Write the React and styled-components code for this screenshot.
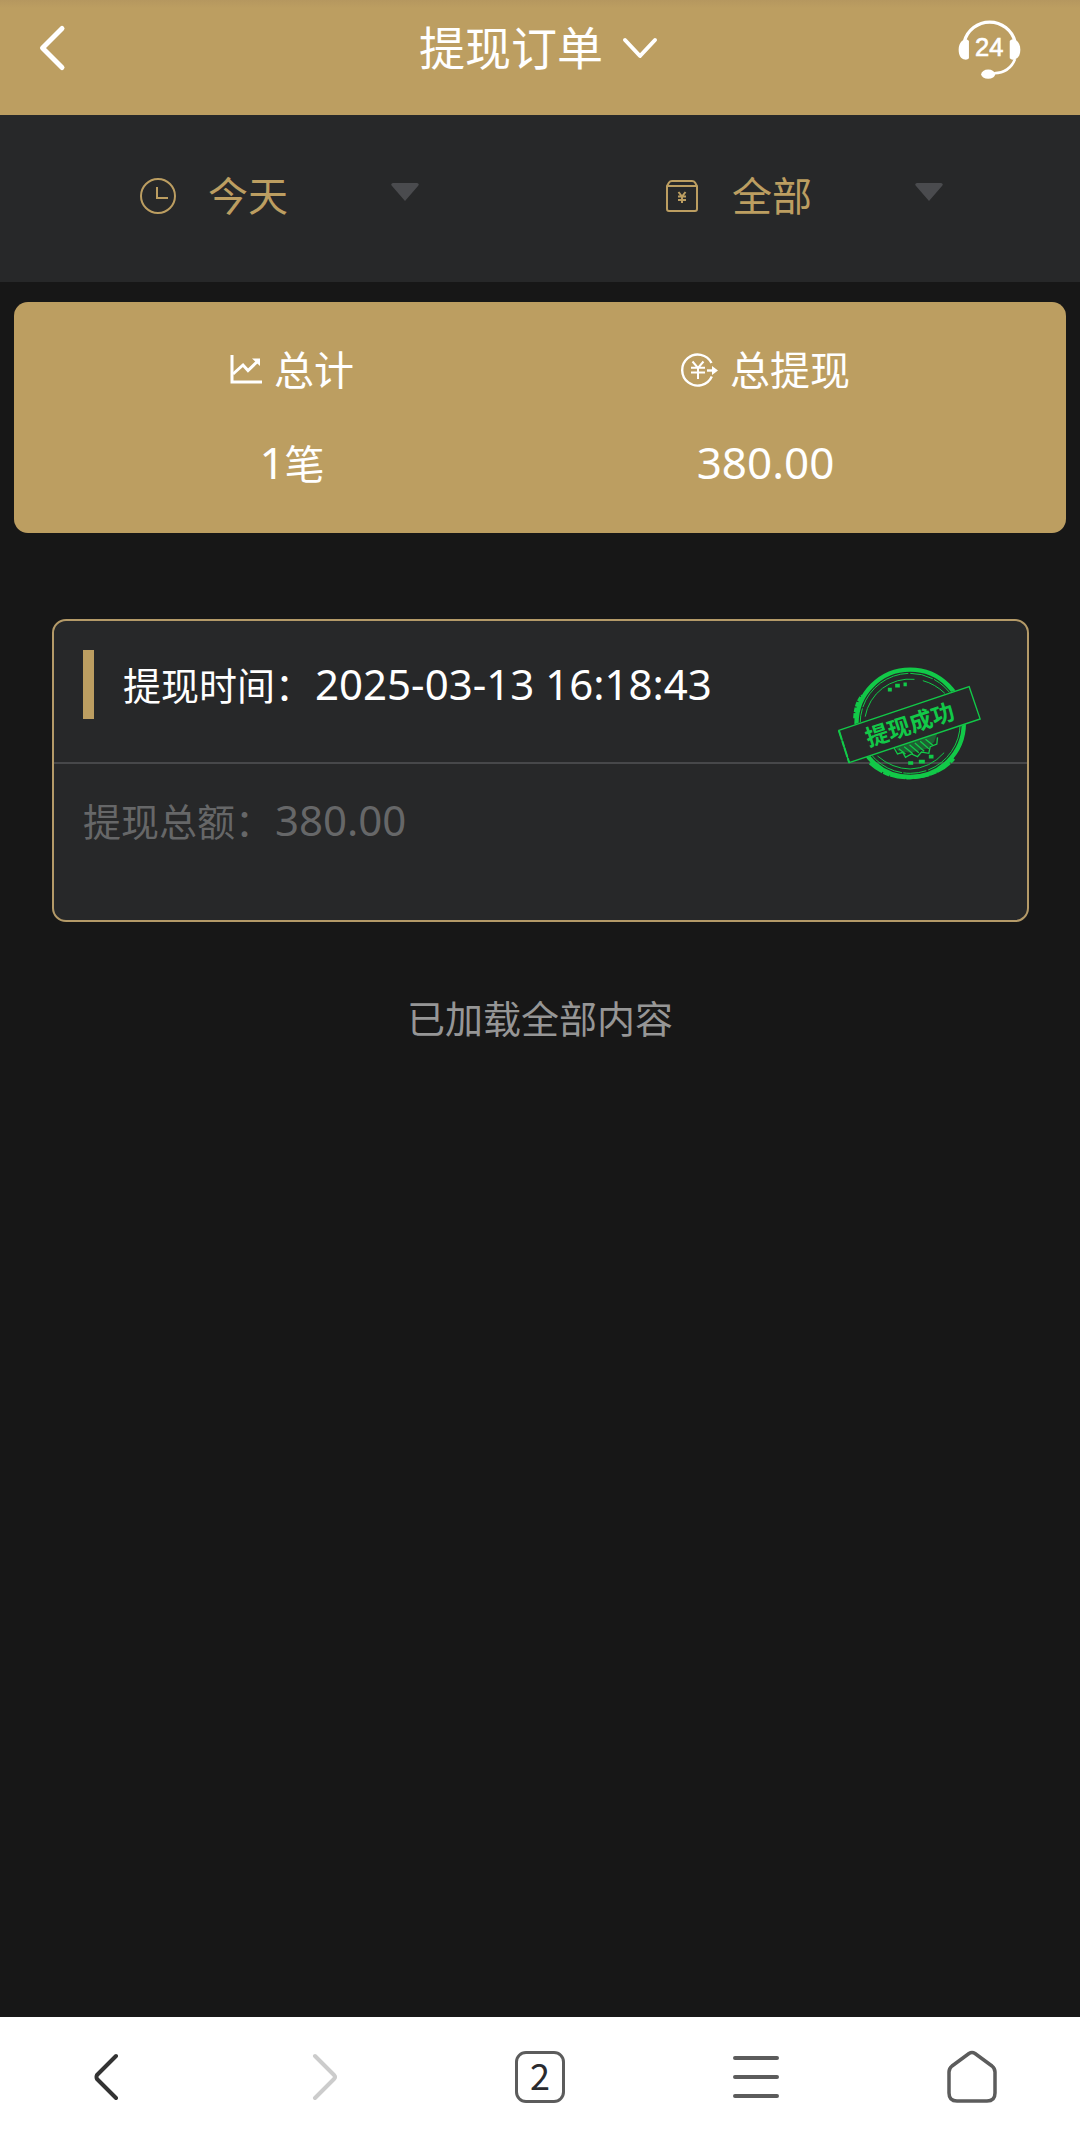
import { useState } from "react"
import styled, { createGlobalStyle, ThemeProvider } from "styled-components"

const theme = {
  colors: {
    gold: "#bc9e61",
    panel: "#272829",
    background: "#171717",
    line: "#47484a",
    muted: "#666768",
    hint: "#969696",
    stamp: "#12c948",
  },
}

const GlobalStyle = createGlobalStyle`
  * {
    box-sizing: border-box;
    margin: 0;
    padding: 0;
  }

  body {
    background-color: ${theme.colors.background};
    font-family: "Noto Sans", "Noto Sans CJK SC", sans-serif;
    color: #fff;
  }

  button,
  select {
    background: none;
    border: none;
    color: inherit;
    font: inherit;
    cursor: pointer;
  }

  svg {
    display: block;
    flex-shrink: 0;
  }
`

const Page = styled.div`
  display: flex;
  flex-direction: column;
  min-height: 100vh;
`

const Header = styled.header`
  display: grid;
  grid-template-columns: 1fr auto 1fr;
  align-items: center;
  height: 115px;
  padding: 0 58px 20px 36px;
  background: linear-gradient(#b5975f, ${(props) => props.theme.colors.gold} 8px);
`

const HeaderButton = styled.button`
  justify-self: ${(props) => (props.$end ? "end" : "start")};
`

const TitleButton = styled.button`
  display: flex;
  align-items: center;
  gap: 18px;
  padding-left: 20px;
`

const Title = styled.h1`
  padding-bottom: 2px;
  font-size: 46px;
  font-weight: 400;
  line-height: 56px;
`

const Filters = styled.form`
  display: grid;
  grid-template-columns: 1fr 1fr;
  justify-items: center;
  height: 167px;
  padding: 0 14px 6px 18px;
  background-color: ${(props) => props.theme.colors.panel};
`

const Filter = styled.label`
  display: flex;
  align-items: center;
  color: ${(props) => props.theme.colors.gold};
`

const FilterSelect = styled.select`
  appearance: none;
  width: 182px;
  height: 60px;
  margin-left: 32px;
  font-size: 40px;
  outline: none;

  option {
    background-color: ${(props) => props.theme.colors.panel};
  }
`

const FilterArrow = styled.svg`
  margin-bottom: 8px;
`

const Summary = styled.section`
  display: flex;
  justify-content: space-between;
  margin: 20px 14px 0;
  padding: 38px 20% 39px;
  border-radius: 14px;
  background-color: ${(props) => props.theme.colors.gold};
`

const SummaryItem = styled.div`
  display: flex;
  flex-direction: column;
  align-items: center;
  gap: 32px;
`

const SummaryLabel = styled.div`
  display: flex;
  align-items: center;
  gap: 12px;
  font-size: 40px;
  line-height: 60px;
`

const SummaryValue = styled.div`
  font-size: 40px;
  line-height: 60px;
`

const Digits = styled.span`
  font-size: ${(props) => (props.$large ? 44 : 42)}px;
`

const Order = styled.article`
  position: relative;
  margin: 86px 51px 0 52px;
  border: 2px solid #b49a68;
  border-radius: 14px;
  background-color: ${(props) => props.theme.colors.panel};
  font-size: 38px;
  line-height: 60px;
`

const OrderLine = styled.p`
  display: flex;
  align-items: baseline;
  gap: 2px;
`

const OrderHeader = styled.div`
  display: flex;
  align-items: center;
  gap: 29px;
  padding: 29px 29px 43px;
  border-bottom: 2px solid ${(props) => props.theme.colors.line};

  &::before {
    content: "";
    width: 11px;
    height: 69px;
    background-color: ${(props) => props.theme.colors.gold};
  }
`

const OrderBody = styled.div`
  padding: 26px 29px 69px;
  color: ${(props) => props.theme.colors.muted};
`

const StampIcon = styled.svg`
  position: absolute;
  top: 45px;
  right: 44px;
`

const EndOfList = styled.p`
  margin-top: 66px;
  font-size: 38px;
  line-height: 60px;
  text-align: center;
  color: ${(props) => props.theme.colors.hint};
`

const BottomBar = styled.nav`
  position: sticky;
  bottom: 0;
  display: grid;
  grid-template-columns: repeat(5, 1fr);
  height: 120px;
  margin-top: auto;
  background-color: #fff;
`

const BottomButton = styled.button`
  display: flex;
  align-items: center;
  justify-content: center;
  color: ${(props) => props.$color || "#5c5c5c"};
`

const TabCount = styled.span`
  display: flex;
  align-items: center;
  justify-content: center;
  width: 50px;
  height: 52px;
  padding-bottom: 6px;
  border: 3px solid #5c5c5c;
  border-radius: 11px;
  font-family: "Noto Sans CJK SC", sans-serif;
  font-size: 36px;
  line-height: 40px;
  color: #2a2a2e;
`

const BackIcon = () => (
  <svg width="32" height="48" viewBox="0 0 32 48" fill="none" stroke="currentColor" strokeWidth="5" strokeLinecap="round" strokeLinejoin="round">
    <path d="M26 4.500 L6.500 24 L26 43.500" />
  </svg>
)

const TitleArrowIcon = () => (
  <svg width="38" height="24" viewBox="0 0 38 24" fill="none" stroke="currentColor" strokeWidth="4" strokeLinecap="round" strokeLinejoin="round">
    <path d="M4 4 L19 20 L34 4" />
  </svg>
)

const ServiceIcon = () => (
  <svg width="65" height="64" viewBox="48 19 196 192" fill="currentColor">
    <path d="M70 96 A79 79 0 0 1 223 96" fill="none" stroke="currentColor" strokeWidth="10" />
    <path d="M223 148 C212 176 190 190 160 191" fill="none" stroke="currentColor" strokeWidth="8" />
    <path d="M84 94 V146 Q80 151 72 150 C59 148 53 136 53 120 C53 104 60 92 72 89 Q80 88 84 94 Z" />
    <path d="M207 94 V146 Q211 151 219 150 C232 148 239 136 239 120 C239 104 231 92 219 89 Q211 88 207 94 Z" />
    <ellipse cx="142" cy="194" rx="21" ry="14" />
    <text x="145" y="138" textAnchor="middle" fontFamily="Liberation Sans, sans-serif" fontSize="77" fontWeight="400" stroke="currentColor" strokeWidth="2">24</text>
  </svg>
)

const ClockIcon = () => (
  <svg width="36" height="36" viewBox="0 0 36 36" fill="none" stroke="currentColor" strokeWidth="2">
    <circle cx="18" cy="18" r="17" />
    <path d="M17 9 V20 H28" />
  </svg>
)

const WalletIcon = () => (
  <svg width="36" height="36" viewBox="0 0 36 36" fill="none" stroke="currentColor" strokeWidth="2">
    <path d="M3 8 L5 4.500 Q6 3 8 3 H28 Q30 3 31 4.500 L33 8 V31 Q33 33 31 33 H5 Q3 33 3 31 Z M3 8 H33" />
    <path d="M14.500 14 L18 18.500 L21.500 14 M18 18 V25 M14 18.500 H22 M14 22 H22" />
  </svg>
)

const ChartIcon = () => (
  <svg width="32" height="30" viewBox="0 0 32 30" fill="none" stroke="currentColor" strokeWidth="3">
    <path d="M2 0 V27 H32" />
    <path d="M3 19 L13 10 L18 15.500 L28 6" />
    <path d="M22 3.500 H30 V11 Z" fill="currentColor" stroke="none" />
  </svg>
)

const WithdrawIcon = () => (
  <svg width="37" height="34" viewBox="0 0 37 34" fill="none" stroke="currentColor" strokeWidth="2.400">
    <path d="M30.500 10 A15.500 15.500 0 1 0 30.800 23.500" />
    <path d="M11.500 8.500 L17 15 L22.500 8.500 M17 15 V26 M10 14.800 H24 M10 19.500 H24" strokeWidth="2" />
    <path d="M26 17.500 H32" />
    <path d="M31 13 L37 17.500 L31 22 Z" fill="currentColor" stroke="none" />
  </svg>
)

const SuccessStamp = () => (
  <StampIcon width="147" height="116" viewBox="48 48 440 348" fill="none" stroke={theme.colors.stamp} role="img" aria-label="提现成功">
    <mask id="outside-band" maskUnits="userSpaceOnUse" x="48" y="48" width="440" height="348">
      <rect x="48" y="48" width="440" height="348" fill="#fff" stroke="none" />
      <path d="M52 240 L448 107 L482 208 L85 340 Z" fill="#000" stroke="none" />
    </mask>
    <g mask="url(#outside-band)">
      <circle cx="270" cy="220" r="161" strokeWidth="13" />
      <circle cx="270" cy="220" r="150" strokeWidth="3" strokeDasharray="180 6 70 4" />
      <path d="M106 205 Q108 160 128 138" strokeWidth="14" strokeDasharray="14 3" />
      <path d="M150 338 Q210 392 290 380 Q360 372 400 325" strokeWidth="12" strokeDasharray="46 3 20 2" />
      <path d="M135 200 A136 136 0 0 1 283 88 M308 92 Q345 102 374 130" strokeWidth="3" />
      <path d="M172 318 Q216 356 270 357 Q330 355 372 308" strokeWidth="3" />
      <path d="M222 294 L232 312 L248 307 L256 322 L274 312 L292 320 L304 306 L326 310 L330 290 L350 282 L352 262" strokeWidth="4" />
      <path d="M222 290 L352 248 L342 276 L320 296 L270 308 L236 304 Z" fill={theme.colors.stamp} fillOpacity="0.35" stroke="none" />
      <path d="M236 296 L256 312 M252 290 L278 311 M268 284 L296 308 M284 279 L312 304 M300 274 L326 296 M316 268 L338 286" strokeWidth="4" />
      <path d="M203 119 h12 M225 107 h14 M250 103 h10 M264 339 h15 M296 335 h18 M326 320 h14" strokeWidth="11" />
    </g>
    <path d="M56 241 L447 110 L480 207 L87 338 Z" strokeWidth="4" />
    <path d="M56 241 L87 338" strokeWidth="6" strokeDasharray="30 4 18 2" />
    <text
      x="269"
      y="249"
      transform="rotate(-18 269 224)"
      textAnchor="middle"
      fontFamily="Noto Sans CJK SC, sans-serif"
      fontSize="69"
      fontWeight="700"
      fill={theme.colors.stamp}
      stroke="none"
    >
      提现成功
    </text>
  </StampIcon>
)

const MenuIcon = () => (
  <svg width="46" height="42" viewBox="0 0 46 42" fill="none" stroke="currentColor" strokeWidth="4" strokeLinecap="round">
    <path d="M2 2 H44 M2 21 H44 M2 40 H44" />
  </svg>
)

const HomeIcon = () => (
  <svg width="50" height="54" viewBox="0 0 50 54" fill="none" stroke="currentColor" strokeWidth="3.500" strokeLinejoin="round">
    <path d="M22 3.500 Q25 1.500 28 3.500 L45 16 Q48 18.500 48 22 V43 Q48 51 40 51 H10 Q2 51 2 43 V22 Q2 18.500 5 16 Z" />
  </svg>
)

const BrowserArrowIcon = ({ forward = false }) => (
  <svg
    width="28"
    height="48"
    viewBox={forward ? "-4 0 28 48" : "3 0 28 48"}
    fill="none"
    stroke="currentColor"
    strokeWidth="4"
    strokeLinecap="round"
    strokeLinejoin="round"
  >
    <path d={forward ? "M1 3 L20 22 Q22 24 20 26 L1 45" : "M25 3 L6 22 Q5 24 6 26 L25 45"} />
  </svg>
)

const FilterField = ({ icon, label, value, options, onChange }) => (
  <Filter>
    {icon}
    <FilterSelect aria-label={label} value={value} onChange={(e) => onChange(e.target.value)}>
      {options.map((option) => (
        <option key={option}>{option}</option>
      ))}
    </FilterSelect>
    <FilterArrow width="30" height="18" viewBox="0 0 30 18" fill="#4a4b4e">
      <path d="M3 0 H27 Q30 1 28 3 L15 18 L2 3 Q0 1 3 0 Z" />
    </FilterArrow>
  </Filter>
)

export default function App() {
  const [period, setPeriod] = useState("今天")
  const [type, setType] = useState("全部")

  return (
    <ThemeProvider theme={theme}>
      <GlobalStyle />
      <Page>
        <Header>
          <HeaderButton type="button" aria-label="返回">
            <BackIcon />
          </HeaderButton>
          <TitleButton type="button">
            <Title>提现订单</Title>
            <TitleArrowIcon />
          </TitleButton>
          <HeaderButton type="button" aria-label="客服" $end>
            <ServiceIcon />
          </HeaderButton>
        </Header>

        <Filters>
          <FilterField icon={<ClockIcon />} label="时间" value={period} options={["今天", "昨天"]} onChange={setPeriod} />
          <FilterField icon={<WalletIcon />} label="类型" value={type} options={["全部", "成功"]} onChange={setType} />
        </Filters>

        <main>
          <Summary>
            <SummaryItem>
              <SummaryLabel>
                <ChartIcon />
                总计
              </SummaryLabel>
              <SummaryValue>
                <Digits $large>1</Digits>笔
              </SummaryValue>
            </SummaryItem>
            <SummaryItem>
              <SummaryLabel>
                <WithdrawIcon />
                总提现
              </SummaryLabel>
              <SummaryValue>
                <Digits $large>380.00</Digits>
              </SummaryValue>
            </SummaryItem>
          </Summary>

          <Order>
            <OrderHeader>
              <OrderLine>
                提现时间：<Digits>2025-03-13 16:18:43</Digits>
              </OrderLine>
            </OrderHeader>
            <OrderBody>
              <OrderLine>
                提现总额：<Digits>380.00</Digits>
              </OrderLine>
            </OrderBody>
            <SuccessStamp />
          </Order>

          <EndOfList>已加载全部内容</EndOfList>
        </main>

        <BottomBar>
          <BottomButton type="button" aria-label="后退" $color="#333">
            <BrowserArrowIcon />
          </BottomButton>
          <BottomButton type="button" aria-label="前进" $color="#ccc">
            <BrowserArrowIcon forward />
          </BottomButton>
          <BottomButton type="button" aria-label="标签页">
            <TabCount>2</TabCount>
          </BottomButton>
          <BottomButton type="button" aria-label="菜单">
            <MenuIcon />
          </BottomButton>
          <BottomButton type="button" aria-label="主页">
            <HomeIcon />
          </BottomButton>
        </BottomBar>
      </Page>
    </ThemeProvider>
  )
}
